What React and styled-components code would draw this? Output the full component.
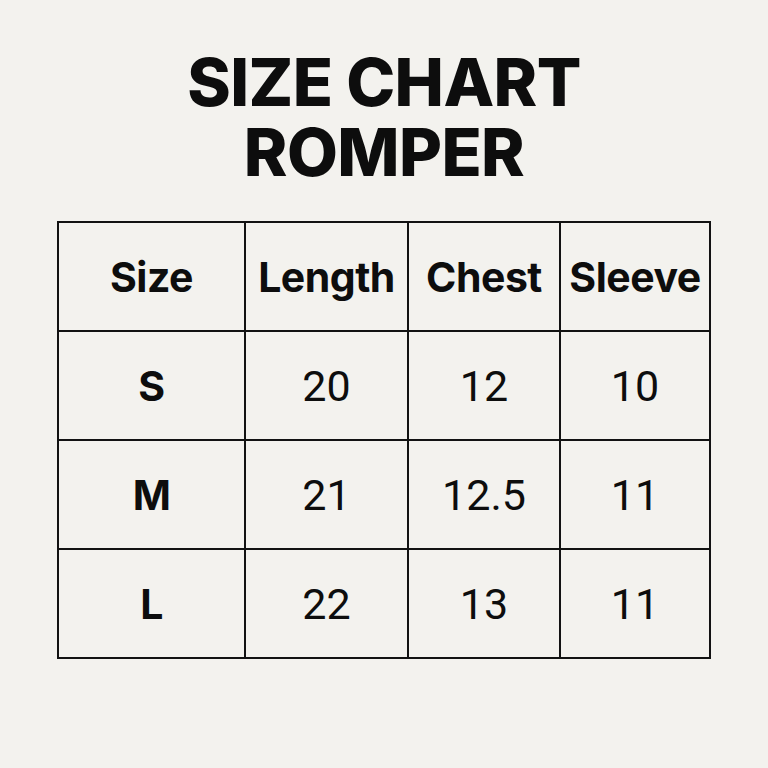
import React from 'react';
import styled, { createGlobalStyle } from 'styled-components';

const headers = ['Size', 'Length', 'Chest', 'Sleeve'];

const rows = [
  { size: 'S', values: ['20', '12', '10'] },
  { size: 'M', values: ['21', '12.5', '11'] },
  { size: 'L', values: ['22', '13', '11'] },
];

export default function App() {
  return (
    <Page>
      <GlobalStyle />
      <Title>
        <TitleLine>SIZE CHART</TitleLine>
        <TitleLine>ROMPER</TitleLine>
      </Title>
      <Chart>
        {headers.map((h) => (
          <Cell key={h} $bold>{h}</Cell>
        ))}
        {rows.map((row) => (
          <React.Fragment key={row.size}>
            <Cell $bold>{row.size}</Cell>
            {row.values.map((v, i) => (
              <Cell key={i}>{v}</Cell>
            ))}
          </React.Fragment>
        ))}
      </Chart>
    </Page>
  );
}

const GlobalStyle = createGlobalStyle`
  * {
    box-sizing: border-box;
  }
  html, body {
    margin: 0;
    padding: 0;
    background: #f3f2ee;
  }
`;

const Page = styled.div`
  width: 768px;
  height: 768px;
  display: flex;
  flex-direction: column;
  align-items: center;
  padding-top: 47px;
  background: #f3f2ee;
  color: #0d0d0d;
`;

const Title = styled.h1`
  margin: 0 0 34px;
  display: flex;
  flex-direction: column;
  align-items: center;
  font-family: Inter, "Liberation Sans", sans-serif;
  font-weight: 800;
  font-size: 66px;
  line-height: 70px;
  letter-spacing: -0.6px;
`;

const TitleLine = styled.span`
  display: block;
  height: 70px;
`;

const Chart = styled.div`
  display: grid;
  grid-template-columns: 185px 161px 150px 148px;
  grid-auto-rows: 107px;
  gap: 2px;
  padding: 2px;
  background: #121212;
`;

const Cell = styled.div`
  display: flex;
  align-items: center;
  justify-content: center;
  background: #f3f2ee;
  font-family: ${(p) => (p.$bold ? 'Inter, "Liberation Sans", sans-serif' : 'Roboto, "Liberation Sans", sans-serif')};
  font-weight: ${(p) => (p.$bold ? 700 : 400)};
  font-size: ${(p) => (p.$bold ? '41px' : '43px')};
  letter-spacing: ${(p) => (p.$bold ? '-0.5px' : '0')};
  white-space: nowrap;
`;
